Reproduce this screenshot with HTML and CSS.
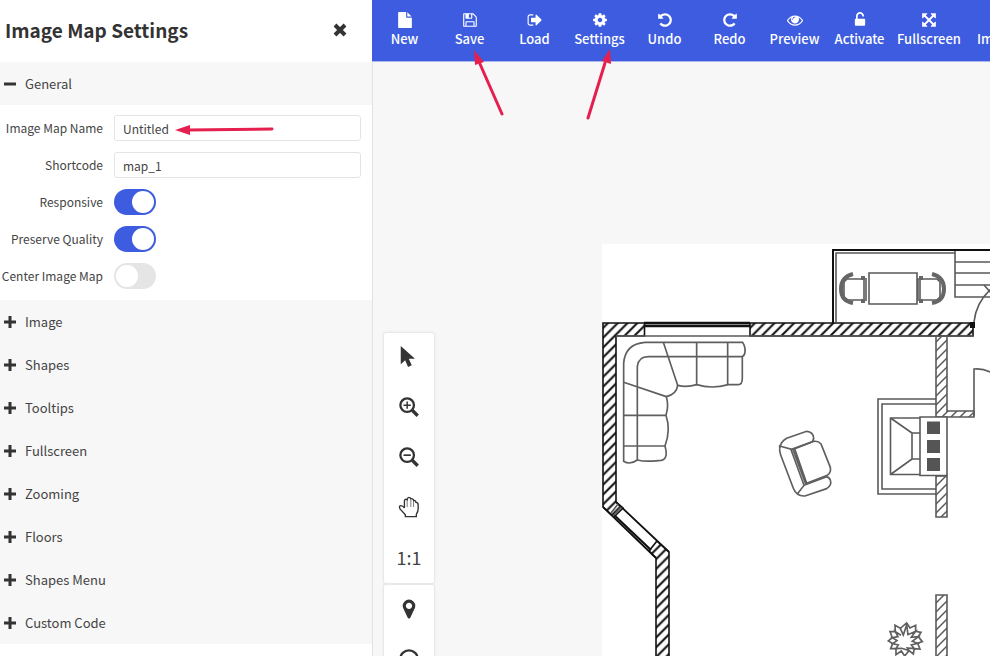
FILE: index.html
```html
<!DOCTYPE html>
<html lang="en">
<head>
    <meta charset="UTF-8">
    <meta name="viewport" content="width=device-width, initial-scale=1.0">
    <title>Image Map Settings</title>
    <link rel="stylesheet" href="styles.css">
</head>
<body>
    <div class="editor">
        <aside class="settings">
            <header class="settings-header">
                <h1>Image Map Settings</h1>
                <button type="button" class="close" aria-label="Close">
                    <svg viewBox="0 0 14 14"><path d="M2 2l10 10M12 2l-10 10"/></svg>
                </button>
            </header>

            <button type="button" class="section-title open"><svg viewBox="0 0 12 12"><path d="M0 6h12"/></svg>General</button>
            <form class="section-body">
                <label for="map-name">Image Map Name</label>
                <input type="text" id="map-name" value="Untitled">
                <label for="shortcode">Shortcode</label>
                <input type="text" id="shortcode" value="map_1">
                <label for="responsive">Responsive</label>
                <input type="checkbox" class="toggle" id="responsive" checked>
                <label for="quality">Preserve Quality</label>
                <input type="checkbox" class="toggle" id="quality" checked>
                <label for="center">Center Image Map</label>
                <input type="checkbox" class="toggle" id="center">
            </form>

            <button type="button" class="section-title"><svg viewBox="0 0 12 12"><path d="M0 6h12M6 0v12"/></svg>Image</button>
            <button type="button" class="section-title"><svg viewBox="0 0 12 12"><path d="M0 6h12M6 0v12"/></svg>Shapes</button>
            <button type="button" class="section-title"><svg viewBox="0 0 12 12"><path d="M0 6h12M6 0v12"/></svg>Tooltips</button>
            <button type="button" class="section-title"><svg viewBox="0 0 12 12"><path d="M0 6h12M6 0v12"/></svg>Fullscreen</button>
            <button type="button" class="section-title"><svg viewBox="0 0 12 12"><path d="M0 6h12M6 0v12"/></svg>Zooming</button>
            <button type="button" class="section-title"><svg viewBox="0 0 12 12"><path d="M0 6h12M6 0v12"/></svg>Floors</button>
            <button type="button" class="section-title"><svg viewBox="0 0 12 12"><path d="M0 6h12M6 0v12"/></svg>Shapes Menu</button>
            <button type="button" class="section-title"><svg viewBox="0 0 12 12"><path d="M0 6h12M6 0v12"/></svg>Custom Code</button>
        </aside>

        <main class="workspace">
            <nav class="toolbar">
                <button type="button">
                    <svg viewBox="0 0 1792 1792"><path d="M1152 512v-472q22 14 36 28l408 408q14 14 28 36h-472zm-128 32q0 40 28 68t68 28h544v1056q0 40-28 68t-68 28h-1344q-40 0-68-28t-28-68v-1600q0-40 28-68t68-28h800v544z"/></svg>
                    New
                </button>
                <button type="button">
                    <svg viewBox="0 0 1792 1792"><path d="M512 1536h768v-384h-768v384zm896 0h128v-896q0-14-10-38.5t-20-34.5l-281-281q-10-10-34-20t-39-10v416q0 40-28 68t-68 28h-576q-40 0-68-28t-28-68v-416h-128v1280h128v-416q0-40 28-68t68-28h832q40 0 68 28t28 68v416zm-384-928v-320q0-13-9.5-22.5t-22.5-9.5h-192q-13 0-22.5 9.5t-9.5 22.5v320q0 13 9.5 22.5t22.5 9.5h192q13 0 22.5-9.5t9.5-22.5zm640 32v928q0 40-28 68t-68 28h-1344q-40 0-68-28t-28-68v-1344q0-40 28-68t68-28h928q40 0 88 20t76 48l280 280q28 28 48 76t20 88z"/></svg>
                    Save
                </button>
                <button type="button">
                    <svg viewBox="0 0 1792 1792"><path d="M704 1440q0 4 1 20t.5 26.5-3 23.5-10 19.5-20.5 6.5h-320q-119 0-203.5-84.5t-84.5-203.5v-704q0-119 84.5-203.5t203.5-84.5h320q13 0 22.5 9.5t9.5 22.5q0 4 1 20t.5 26.5-3 23.5-10 19.5-20.5 6.5h-320q-66 0-113 47t-47 113v704q0 66 47 113t113 47h312l11.5 1 11.5 3 8 5.5 7 9 2 13.5zm928-544q0 26-19 45l-544 544q-19 19-45 19t-45-19-19-45v-288h-448q-26 0-45-19t-19-45v-384q0-26 19-45t45-19h448v-288q0-26 19-45t45-19 45 19l544 544q19 19 19 45z"/></svg>
                    Load
                </button>
                <button type="button">
                    <svg viewBox="0 0 1792 1792"><path d="M1152 896q0-106-75-181t-181-75-181 75-75 181 75 181 181 75 181-75 75-181zm512-109v222q0 12-8 23t-20 13l-185 28q-19 54-39 91 35 50 107 138 10 12 10 25t-9 23q-27 37-99 108t-94 71q-12 0-26-9l-138-108q-44 23-91 38-16 136-29 186-7 28-36 28h-222q-14 0-24.5-8.5t-11.5-21.5l-28-184q-49-16-90-37l-141 107q-10 9-25 9-14 0-25-11-126-114-165-168-7-10-7-23 0-12 8-23 15-21 51-66.5t54-70.5q-27-50-41-99l-183-27q-13-2-21-12.5t-8-23.5v-222q0-12 8-23t19-13l186-28q14-46 39-92-40-57-107-138-10-12-10-24 0-10 9-23 26-36 98.5-107.5t94.5-71.5q13 0 26 10l138 107q44-23 91-38 16-136 29-186 7-28 36-28h222q14 0 24.5 8.5t11.5 21.5l28 184q49 16 90 37l142-107q9-9 24-9 13 0 25 10 129 119 165 170 7 8 7 22 0 12-8 23-15 21-51 66.5t-54 70.5q26 50 41 98l183 28q13 2 21 12.5t8 23.5z"/></svg>
                    Settings
                </button>
                <button type="button">
                    <svg viewBox="0 0 1792 1792"><path d="M1664 896q0 156-61 298t-164 245-245 164-298 61q-172 0-327-72.5t-264-204.5q-7-10-6.5-22.5t8.5-20.5l137-138q10-9 25-9 16 2 23 12 73 95 179 147t225 52q104 0 198.5-40.5t163.5-109.5 109.5-163.5 40.5-198.5-40.5-198.5-109.5-163.5-163.5-109.5-198.5-40.5q-98 0-188 35.5t-160 101.5l137 138q31 30 14 69-17 40-59 40h-448q-26 0-45-19t-19-45v-448q0-42 40-59 39-17 69 14l130 129q107-101 244.5-156.5t284.5-55.5q156 0 298 61t245 164 164 245 61 298z"/></svg>
                    Undo
                </button>
                <button type="button">
                    <svg viewBox="0 0 1792 1792"><path transform="matrix(-1 0 0 1 1792 0)" d="M1664 896q0 156-61 298t-164 245-245 164-298 61q-172 0-327-72.5t-264-204.5q-7-10-6.5-22.5t8.5-20.5l137-138q10-9 25-9 16 2 23 12 73 95 179 147t225 52q104 0 198.5-40.5t163.5-109.5 109.5-163.5 40.5-198.5-40.5-198.5-109.5-163.5-163.5-109.5-198.5-40.5q-98 0-188 35.5t-160 101.5l137 138q31 30 14 69-17 40-59 40h-448q-26 0-45-19t-19-45v-448q0-42 40-59 39-17 69 14l130 129q107-101 244.5-156.5t284.5-55.5q156 0 298 61t245 164 164 245 61 298z"/></svg>
                    Redo
                </button>
                <button type="button">
                    <svg viewBox="0 0 1792 1792"><path d="M1664 960q-152-236-381-353 61 104 61 225 0 185-131.5 316.5t-316.5 131.5-316.5-131.5-131.5-316.5q0-121 61-225-229 117-381 353 133 205 333.5 326.5t434.5 121.5 434.5-121.5 333.5-326.5zm-720-384q0-20-14-34t-34-14q-125 0-214.5 89.5t-89.5 214.5q0 20 14 34t34 14 34-14 14-34q0-86 61-147t147-61q20 0 34-14t14-34zm848 384q0 34-20 69-140 230-376.5 368.5t-499.5 138.5-499.5-139-376.5-368q-20-35-20-69t20-69q140-229 376.5-368t499.5-139 499.5 139 376.5 368q20 35 20 69z"/></svg>
                    Preview
                </button>
                <button type="button">
                    <svg viewBox="0 0 1792 1792"><path d="M1376 768q40 0 68 28t28 68v576q0 40-28 68t-68 28h-960q-40 0-68-28t-28-68v-576q0-40 28-68t68-28h32v-320q0-185 131.5-316.5t316.5-131.5 316.5 131.5 131.5 316.5q0 26-19 45t-45 19h-64q-26 0-45-19t-19-45q0-106-75-181t-181-75-181 75-75 181v320h736z"/></svg>
                    Activate
                </button>
                <button type="button">
                    <svg viewBox="0 0 1792 1792"><path d="M1411 541l-355 355 355 355 144-144q29-31 70-14 39 17 39 59v448q0 26-19 45t-45 19h-448q-42 0-59-40-17-39 14-69l144-144-355-355-355 355 144 144q31 30 14 69-17 40-59 40h-448q-26 0-45-19t-19-45v-448q0-42 40-59 39-17 69 14l144 144 355-355-355-355-144 144q-19 19-45 19-12 0-24-5-40-17-40-59v-448q0-26 19-45t45-19h448q42 0 59 40 17 39-14 69l-144 144 355 355 355-355-144-144q-31-30-14-69 17-40 59-40h448q26 0 45 19t19 45v448q0 42-39 59-13 5-25 5-26 0-45-19z"/></svg>
                    Fullscreen
                </button>
                <button type="button">
                    <svg viewBox="0 0 1792 1792"></svg>
                    Import
                </button>
            </nav>

            <div class="canvas">
                <svg class="plan" viewBox="602 244 400 420">
                    <defs>
                        <pattern id="hatch" width="9.8" height="9.8" patternUnits="userSpaceOnUse">
                            <path d="M-1 10.8L10.8 -1M-1 1L1 -1M8.8 10.8L10.8 8.8" stroke="#111" stroke-width="2.1"/>
                        </pattern>
                        <pattern id="hatch-grey" width="9" height="9" patternUnits="userSpaceOnUse">
                            <path d="M-1 10L10 -1M-1 1L1 -1M8 10L10 8" stroke="#5a5a5a" stroke-width="1.5"/>
                        </pattern>
                    </defs>

                    <!-- outer walls -->
                    <path class="wall" d="M603 323H644.500V336H616V502L623 508L614 517L603 507Z"/>
                    <path class="wall" d="M750 323H973V336H750Z"/>
                    <path class="wall" d="M657 541L669 552V670H656V558L649 551Z"/>
                    <path class="ink" d="M644 323H750M644 326H750" stroke-width="2.4"/>
                    <path class="line" d="M616 336H973"/>
                    <path class="ink" d="M616 502L669 552M603 507L656 558" stroke-width="1.8"/>
                    <path class="ink" d="M613 514L651 550" stroke-width="2.2"/>
                    <path class="line" d="M611 513L618 504M613 516L621 507"/>
                    <path d="M970 322h5v6h-5z" fill="#111"/>

                    <!-- balcony -->
                    <path class="ink" d="M833 323V250H1002" stroke-width="2"/>
                    <path class="line" d="M836 322V253H955"/>
                    <path class="line" d="M1002 297H955V251M955 262H1002M955 273H1002M955 285H1002"/>
                    <path class="line" d="M869 273H917V304H869Z"/>
                    <path class="line" d="M847 279H864V300H847L844 297V282ZM920 279H937L940 282V297L937 300H920ZM866 278V301M918 278V301"/>
                    <path class="arm" d="M853 274Q841 277 841 289T853 303M932 274Q944 277 944 289T932 303"/>
                    <path class="arm" d="M861 278h4M861 301h4M919 278h4M919 301h4" stroke-width="2"/>
                    <path class="line" d="M974 322Q976 302 992 288M984 285L992 294"/>

                    <!-- inner walls and door -->
                    <path class="wall-grey" d="M936 336V417H974V411H947V336"/>
                    <path class="wall-grey" d="M936 476H947V517H936Z"/>
                    <path class="wall-grey" d="M936 595H947V670H936Z"/>
                    <path class="line" d="M974 416V369Q983 368 992 373"/>

                    <!-- fireplace -->
                    <path class="line" d="M936 399H878V494H936M936 404H882V489H936"/>
                    <path class="line" d="M920 418H890.500V474.500H920M890.500 418L912 433V459L890.500 474.500M912 433H920M912 459H920"/>
                    <path class="line" d="M920 417H947V475.500H920Z" fill="#fff"/>
                    <path d="M927 421.500h13v12.500h-13zM927 440h13v13h-13zM927 458h13v13h-13z" fill="#555"/>

                    <!-- corner sofa -->
                    <g class="furniture" transform="translate(595 240) scale(.3333)">
                        <path d="M86 664V370Q90 312 150 307H443Q452 322 450 335Q450 345 442 350V415Q442 434 430 434H400Q350 448 305 434Q275 443 248 436Q245 462 214 470Q222 495 213 526Q228 570 210 618Q216 640 212 650Q208 662 190 662Q150 666 127 660Q105 676 86 664Z"/>
                        <path d="M127 660V380Q130 350 160 350H442M205 307L248 436M305 307V434M398 307V434M86 427L214 470M86 526H213M86 618H210"/>
                    </g>

                    <!-- armchair -->
                    <g class="furniture" transform="translate(770 380) scale(.3333)">
                        <path d="M29 205Q32 185 50 175L110 154Q130 155 131 175Q130 185 120 188L65 208L29 198Q28 215 32 225L70 325Q80 350 105 348L170 326Q186 316 181 300Q176 290 168 291L102 316L82 342"/>
                        <path d="M62 206L102 316M68 206L107 312M74 206L110 310L172 286Q184 278 181 262L153 192Q145 182 132 184L74 206"/>
                    </g>

                    <!-- plant -->
                    <g class="furniture" transform="translate(770 380) scale(.3333)">
                        <path d="M410 729L420 744L437 736L437 754L453 757L445 770L457 785L443 790L450 807L433 806L430 822L417 812L404 828L394 813L378 824L378 806L362 806L368 791L355 783L367 773L360 755L376 755L375 736L391 745Z"/>
                        <path d="M391 745L400 765L410 735L414 764L437 754L424 772L445 770L427 784L443 790L424 795L433 806L412 804L417 812L395 805L378 806L385 795L368 791L381 782L367 773L384 770L376 755L393 766"/>
                    </g>
                </svg>

                <div class="tools">
                    <div class="tool-group">
                        <button type="button" aria-label="Select"><svg viewBox="0 0 24 24"><path class="solid" d="M3 0v20l4.800-4.500 3.200 7.300 4-1.700-3.200-7.100h6.700z"/></svg></button>
                        <button type="button" aria-label="Zoom in"><svg viewBox="0 0 24 24"><circle cx="10" cy="10" r="7.400"/><path d="M15.500 15.500l6 6" stroke-width="3.600"/><path d="M6 10h8M10 6v8" stroke-width="1.600"/></svg></button>
                        <button type="button" aria-label="Zoom out"><svg viewBox="0 0 24 24"><circle cx="10" cy="10" r="7.400"/><path d="M15.500 15.500l6 6" stroke-width="3.600"/><path d="M6 10h8" stroke-width="1.800"/></svg></button>
                        <button type="button" aria-label="Pan"><svg viewBox="0 0 24 24"><path d="M7 13V5.500Q7 3.500 8.600 3.500Q9.400 3.500 10 4Q10.400 1.500 12 1.500Q13.600 1.500 14 3Q16.600 2.500 17 5Q19.300 4.500 19.600 7Q22 7 22 9.500V14Q22 17 20 20V22.500H8V20.500L2.200 14Q.8 11.500 2.600 10.600Q4.500 10 7 13" stroke-width="1.500"/><path d="M10 4.500V12M14 3.500V12M17 5.500V12" stroke-width=".7"/></svg></button>
                        <button type="button">1:1</button>
                    </div>
                    <div class="tool-group">
                        <button type="button" aria-label="Spot"><svg viewBox="0 0 1792 1792"><path class="solid" d="M1152 640q0-106-75-181t-181-75-181 75-75 181 75 181 181 75 181-75 75-181zm256 0q0 109-33 179l-364 774q-16 33-47.500 52t-67.500 19-67.500-19-46.500-52l-365-774q-33-70-33-179 0-212 150-362t362-150 362 150 150 362z"/></svg></button>
                        <button type="button" aria-label="Ellipse"><svg viewBox="0 0 24 24"><circle cx="12" cy="12" r="9.500"/></svg></button>
                    </div>
                </div>
            </div>
        </main>

        <svg class="pointers" viewBox="0 0 990 656">
            <path d="M272 129L188 130M502 114L480 64M588 118L605 63"/>
            <path class="head" d="M175 130L190 125V135ZM474 50L484 62L475 65ZM610 49L611 64L602 61Z"/>
        </svg>
    </div>
</body>
</html>
```
FILE: styles.css
```css
* {
    box-sizing: border-box;
}

body {
    margin: 0;
    font-family: "Noto Sans CJK SC", "Open Sans", sans-serif;
    font-size: 13px;
    color: #444;
    background-color: #fff;
}

button {
    font: inherit;
    color: inherit;
    border: none;
    background: none;
    padding: 0;
    cursor: pointer;
}

.editor {
    position: relative;
    display: flex;
    height: 100vh;
    overflow: hidden;
}

/* Settings panel */
.settings {
    flex: 0 0 372px;
    background-color: #fff;
}

.settings-header {
    display: flex;
    align-items: center;
    justify-content: space-between;
    height: 62px;
    padding: 0 25px 3px 5px;
}

.settings-header h1 {
    margin: 0;
    font-size: 19px;
    line-height: 30px;
    font-weight: 700;
    color: #333;
}

.close svg {
    display: block;
    width: 14px;
    height: 14px;
    fill: none;
    stroke: #333;
    stroke-width: 4;
}

.section-title {
    display: flex;
    align-items: center;
    gap: 9px;
    width: 100%;
    height: 43px;
    padding: 0 4px;
    background-color: #f7f7f7;
    font-size: 13px;
    text-align: left;
}

.section-title svg {
    width: 12px;
    height: 12px;
    stroke: #333;
    stroke-width: 3;
}

.section-body {
    display: grid;
    grid-template-columns: 103px 1fr;
    align-items: center;
    gap: 11px;
    padding: 10px 11px 11px 0;
    font-size: 12px;
}

.section-body label {
    text-align: right;
    white-space: nowrap;
    line-height: 26px;
}

input[type="text"] {
    width: 100%;
    height: 26px;
    padding: 0 8px;
    border: 1px solid #e4e4e4;
    border-radius: 3px;
    font: inherit;
    color: #444;
}

.toggle {
    appearance: none;
    width: 42px;
    height: 26px;
    margin: 0;
    padding: 2px;
    border-radius: 13px;
    background-color: #e5e5e5;
}

.toggle::before {
    content: "";
    display: block;
    width: 22px;
    height: 22px;
    border-radius: 50%;
    background-color: #fff;
}

.toggle:checked {
    background-color: #3d5cdf;
}

.toggle:checked::before {
    margin-left: auto;
}

/* Workspace */
.workspace {
    flex: 1;
    display: flex;
    flex-direction: column;
    min-width: 0;
}

.toolbar {
    display: flex;
    flex-shrink: 0;
    height: 62px;
    overflow: hidden;
    background-color: #3d5cdf;
    border-bottom: 1px solid #a9b6ee;
}

.toolbar button {
    display: flex;
    flex-direction: column;
    align-items: center;
    flex-shrink: 0;
    min-width: 65px;
    padding: 12px 5px 0;
    color: #fff;
    font-weight: 500;
    line-height: 22px;
}

.toolbar svg {
    width: 16px;
    height: 16px;
    fill: #fff;
}

.canvas {
    position: relative;
    flex: 1;
    overflow: hidden;
    background-color: #f7f7f7;
    border-left: 1px solid #e2e2e2;
}

.plan {
    position: absolute;
    left: 229px;
    top: 182px;
    width: 400px;
    height: 420px;
    background-color: #fff;
    fill: none;
}

.wall {
    fill: url(#hatch);
    stroke: #111;
    stroke-width: 1.6;
}

.wall-grey {
    fill: url(#hatch-grey);
    stroke: #5a5a5a;
    stroke-width: 1.6;
}

.ink {
    stroke: #111;
}

.line {
    stroke: #5a5a5a;
    stroke-width: 1.6;
}

.arm {
    stroke: #666;
    stroke-width: 4;
}

.furniture {
    stroke: #5f5f5f;
    stroke-width: 5;
}

/* Floating tool palette */
.tools {
    position: absolute;
    left: 11px;
    top: 271px;
    display: flex;
    flex-direction: column;
    gap: 2px;
}

.tool-group {
    width: 50px;
    background-color: #fff;
    border-radius: 2px;
    box-shadow: 0 0 2px 1px #e4e4e4;
}

.tool-group button {
    display: flex;
    align-items: center;
    justify-content: center;
    width: 50px;
    height: 50px;
    padding-bottom: 2px;
    font-size: 18px;
}

.tool-group svg {
    width: 22px;
    height: 22px;
    fill: none;
    stroke: #333;
    stroke-width: 2.5;
}

.tool-group .solid {
    fill: #333;
    stroke: none;
}

/* Red arrows drawn over the editor */
.pointers {
    position: absolute;
    left: 0;
    top: 0;
    width: 990px;
    height: 656px;
    pointer-events: none;
    fill: none;
    stroke: #e5204f;
    stroke-width: 3;
    stroke-linecap: round;
}

.pointers .head {
    fill: #e5204f;
    stroke: none;
}
```
